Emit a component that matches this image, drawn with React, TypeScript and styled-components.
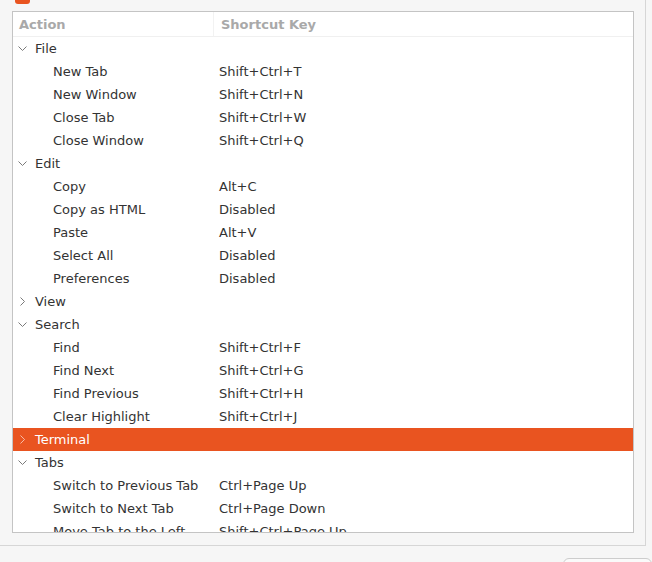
import React from "react";
import styled, { createGlobalStyle } from "styled-components";

type Entry = { action: string; key?: string };
type Group = { name: string; open: boolean; selected?: boolean; entries: Entry[] };

const groups: Group[] = [
  {
    name: "File",
    open: true,
    entries: [
      { action: "New Tab", key: "Shift+Ctrl+T" },
      { action: "New Window", key: "Shift+Ctrl+N" },
      { action: "Close Tab", key: "Shift+Ctrl+W" },
      { action: "Close Window", key: "Shift+Ctrl+Q" },
    ],
  },
  {
    name: "Edit",
    open: true,
    entries: [
      { action: "Copy", key: "Alt+C" },
      { action: "Copy as HTML", key: "Disabled" },
      { action: "Paste", key: "Alt+V" },
      { action: "Select All", key: "Disabled" },
      { action: "Preferences", key: "Disabled" },
    ],
  },
  { name: "View", open: false, entries: [] },
  {
    name: "Search",
    open: true,
    entries: [
      { action: "Find", key: "Shift+Ctrl+F" },
      { action: "Find Next", key: "Shift+Ctrl+G" },
      { action: "Find Previous", key: "Shift+Ctrl+H" },
      { action: "Clear Highlight", key: "Shift+Ctrl+J" },
    ],
  },
  { name: "Terminal", open: false, selected: true, entries: [] },
  {
    name: "Tabs",
    open: true,
    entries: [
      { action: "Switch to Previous Tab", key: "Ctrl+Page Up" },
      { action: "Switch to Next Tab", key: "Ctrl+Page Down" },
      { action: "Move Tab to the Left", key: "Shift+Ctrl+Page Up" },
      { action: "Move Tab to the Right", key: "Shift+Ctrl+Page Down" },
    ],
  },
];

const GlobalStyle = createGlobalStyle`
  html, body {
    margin: 0;
    height: 100%;
    overflow: hidden;
    background: #f6f6f6;
  }
  body {
    font-family: "DejaVu Sans", "Noto Sans", sans-serif;
    font-size: 13px;
    color: #333333;
  }
  * {
    box-sizing: border-box;
  }
`;

const Page = styled.div`
  margin-top: -20px;
`;

const Frame = styled.div`
  width: 647px;
  margin-left: -1px;
  padding: 8px 11px 12px 12px;
  border: 1px solid #d6d6d6;
  border-top: none;
`;

const Check = styled.div`
  width: 15px;
  height: 16px;
  margin: 0 0 7px 3px;
  border-radius: 3px;
  background: #e95420;
`;

const TreeBox = styled.div`
  height: 522px;
  border: 1px solid #c4c4c4;
  background: #ffffff;
  overflow: hidden;
`;

const HeaderRow = styled.div`
  display: grid;
  grid-template-columns: 201px 1fr;
  height: 25px;
  border-bottom: 1px solid #f0f0f0;
`;

const HeaderCell = styled.div<{ $first?: boolean }>`
  display: flex;
  align-items: center;
  padding-left: ${(p) => (p.$first ? "6px" : "7px")};
  font-weight: bold;
  color: #a9a9a9;
  border-right: ${(p) => (p.$first ? "1px solid #f2f2f2" : "none")};
`;

const Row = styled.div<{ $selected?: boolean }>`
  display: grid;
  grid-template-columns: 206px 1fr;
  height: 23px;
  align-items: center;
  white-space: nowrap;
  background: ${(p) => (p.$selected ? "#e95420" : "transparent")};
  color: ${(p) => (p.$selected ? "#ffffff" : "#333333")};
`;

const ActionCell = styled.div<{ $indent: number }>`
  display: flex;
  align-items: center;
  padding-left: ${(p) => p.$indent}px;
`;

const Expander = styled.svg`
  width: 9px;
  height: 9px;
  margin-right: 8px;
  flex: none;
`;

const KeyCell = styled.div``;

const Footer = styled.div`
  display: flex;
  justify-content: flex-end;
  padding-top: 12px;
`;

const Button = styled.div`
  width: 89px;
  height: 34px;
  border: 1px solid #cdcdcd;
  border-radius: 6px;
  background: #fafafa;
`;

const Chevron = ({ open, light }: { open: boolean; light?: boolean }) => (
  <Expander viewBox="0 0 9 9">
    <path
      d={open ? "M0.5 2.5 L4.5 6.5 L8.5 2.5" : "M2.5 0.5 L6.5 4.5 L2.5 8.5"}
      fill="none"
      stroke={light ? "rgba(255,255,255,0.6)" : "#7a7a7a"}
      strokeWidth="1"
    />
  </Expander>
);

export default function App() {
  return (
    <Page>
      <GlobalStyle />
      <Frame>
        <Check />
        <TreeBox>
          <HeaderRow>
            <HeaderCell $first>Action</HeaderCell>
            <HeaderCell>Shortcut Key</HeaderCell>
          </HeaderRow>
          {groups.map((g) => (
            <React.Fragment key={g.name}>
              <Row $selected={g.selected}>
                <ActionCell $indent={5}>
                  <Chevron open={g.open} light={g.selected} />
                  {g.name}
                </ActionCell>
                <KeyCell />
              </Row>
              {g.open &&
                g.entries.map((e) => (
                  <Row key={e.action}>
                    <ActionCell $indent={40}>{e.action}</ActionCell>
                    <KeyCell>{e.key}</KeyCell>
                  </Row>
                ))}
            </React.Fragment>
          ))}
        </TreeBox>
      </Frame>
      <Footer>
        <Button />
      </Footer>
    </Page>
  );
}
